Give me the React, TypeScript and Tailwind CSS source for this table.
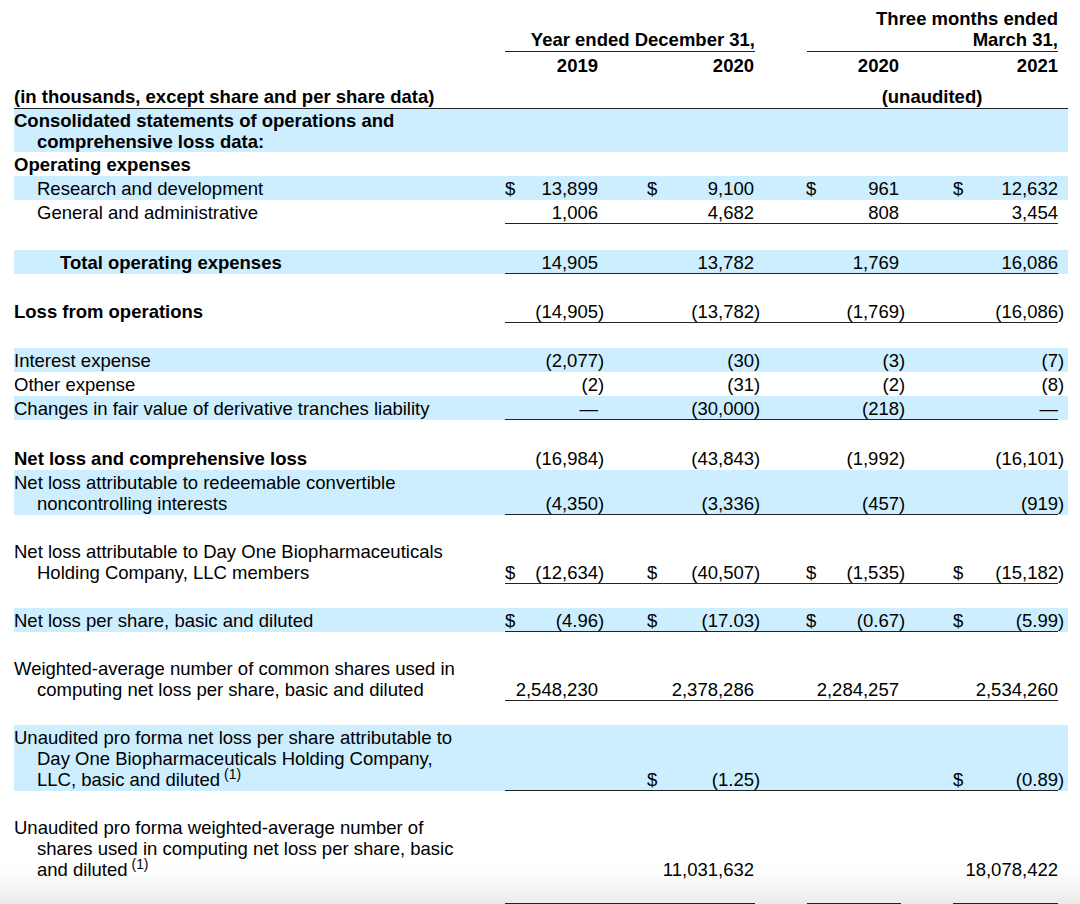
type Cell = { s?: boolean; v?: string }

interface RowProps {
  lines: React.ReactNode[]
  indent?: number
  bold?: boolean
  blue?: boolean
  vals?: Cell[]
  line?: boolean
  pad?: string
}

const COLS = ["w-[93px]", "ml-[49px] w-[107px]", "ml-[52px] w-[93px]", "ml-[54px] w-[105px]"]

function Num({ v }: { v: string }) {
  // closing paren hangs past the column edge
  if (v.endsWith(")")) {
    return (
      <span>
        {v.slice(0, -1)}
        <span className="inline-block w-0">)</span>
      </span>
    )
  }
  return <span>{v}</span>
}

function Values({ vals, line }: { vals: Cell[]; line?: boolean }) {
  return (
    <div className={`flex w-[553px] items-end pt-[2px] ${line ? "border-b border-[#222]" : "pb-[1px]"}`}>
      {vals.map((c, i) => (
        <div key={i} className={`flex justify-between ${COLS[i]}`}>
          <span>{c.s ? "$" : ""}</span>
          {c.v ? <Num v={c.v} /> : null}
        </div>
      ))}
    </div>
  )
}

function Row({ lines, indent = 0, bold, blue, vals, line, pad = "pt-[2px] pb-[1px]" }: RowProps) {
  const ind = indent === 1 ? "pl-[23px]" : indent === 2 ? "pl-[46px]" : ""
  return (
    <div className={`flex w-[1054px] ${blue ? "bg-[#cceeff]" : ""}`}>
      <div className={`w-[491px] whitespace-nowrap ${pad} ${ind} ${bold ? "font-bold" : ""}`}>
        {lines.map((l, i) => (
          <div key={i} className={i > 0 ? "pl-[23px]" : ""}>
            {l}
          </div>
        ))}
      </div>
      {vals && <Values vals={vals} line={line} />}
    </div>
  )
}

const Sup = () => <sup className="ml-[4px]">(1)</sup>

export default function App() {
  return (
    <div className="min-h-[904px] bg-[linear-gradient(to_bottom,#fff_868px,#ebebeb)] pl-[14px] font-['Liberation_Sans',Arial,sans-serif] text-[18.5px] leading-[21px] text-black">
      {/* column headers */}
      <div className="pt-[8px] font-bold">
        <div className="flex">
          <div className="w-[491px]" />
          <div className="flex w-[553px]">
            <div className="w-[250px]" />
            <div className="ml-[52px] w-[251px] text-right">Three months ended</div>
          </div>
        </div>
        <div className="flex">
          <div className="w-[491px]" />
          <div className="flex w-[553px]">
            <div className="w-[250px] border-b border-[#222] pb-[1px] text-right">Year ended December 31,</div>
            <div className="ml-[52px] w-[251px] border-b border-[#222] pb-[1px] text-right">March 31,</div>
          </div>
        </div>
        <div className="flex pt-[3px]">
          <div className="w-[491px]" />
          <div className="flex w-[553px]">
            {["2019", "2020", "2020", "2021"].map((y, i) => (
              <div key={i} className={`text-right ${COLS[i]}`}>
                {y}
              </div>
            ))}
          </div>
        </div>
        <div className="mt-[10px] flex w-[1054px] border-b border-[#222] pb-[1px]">
          <div className="w-[491px] whitespace-nowrap">(in thousands, except share and per share data)</div>
          <div className="flex w-[553px]">
            <div className="ml-[301px] w-[252px] text-center">(unaudited)</div>
          </div>
        </div>
      </div>

      {/* body */}
      <Row blue bold pad="pt-[1px]" lines={["Consolidated statements of operations and", "comprehensive loss data:"]} />
      <Row bold lines={["Operating expenses"]} />
      <Row
        blue
        indent={1}
        lines={["Research and development"]}
        vals={[{ s: true, v: "13,899" }, { s: true, v: "9,100" }, { s: true, v: "961" }, { s: true, v: "12,632" }]}
      />
      <Row
        indent={1}
        line
        lines={["General and administrative"]}
        vals={[{ v: "1,006" }, { v: "4,682" }, { v: "808" }, { v: "3,454" }]}
      />
      <div className="h-[26px]" />
      <Row
        blue
        bold
        indent={2}
        line
        lines={["Total operating expenses"]}
        vals={[{ v: "14,905" }, { v: "13,782" }, { v: "1,769" }, { v: "16,086" }]}
      />
      <div className="h-[25px]" />
      <Row
        bold
        line
        lines={["Loss from operations"]}
        vals={[{ v: "(14,905)" }, { v: "(13,782)" }, { v: "(1,769)" }, { v: "(16,086)" }]}
      />
      <div className="h-[25px]" />
      <Row blue lines={["Interest expense"]} vals={[{ v: "(2,077)" }, { v: "(30)" }, { v: "(3)" }, { v: "(7)" }]} />
      <Row lines={["Other expense"]} vals={[{ v: "(2)" }, { v: "(31)" }, { v: "(2)" }, { v: "(8)" }]} />
      <Row
        blue
        line
        lines={["Changes in fair value of derivative tranches liability"]}
        vals={[{ v: "—" }, { v: "(30,000)" }, { v: "(218)" }, { v: "—" }]}
      />
      <div className="h-[26px]" />
      <Row
        bold
        lines={["Net loss and comprehensive loss"]}
        vals={[{ v: "(16,984)" }, { v: "(43,843)" }, { v: "(1,992)" }, { v: "(16,101)" }]}
      />
      <Row
        blue
        line
        lines={["Net loss attributable to redeemable convertible", "noncontrolling interests"]}
        vals={[{ v: "(4,350)" }, { v: "(3,336)" }, { v: "(457)" }, { v: "(919)" }]}
      />
      <div className="h-[24px]" />
      <Row
        line
        lines={["Net loss attributable to Day One Biopharmaceuticals", "Holding Company, LLC members"]}
        vals={[
          { s: true, v: "(12,634)" },
          { s: true, v: "(40,507)" },
          { s: true, v: "(1,535)" },
          { s: true, v: "(15,182)" },
        ]}
      />
      <div className="h-[24px]" />
      <Row
        blue
        line
        lines={["Net loss per share, basic and diluted"]}
        vals={[
          { s: true, v: "(4.96)" },
          { s: true, v: "(17.03)" },
          { s: true, v: "(0.67)" },
          { s: true, v: "(5.99)" },
        ]}
      />
      <div className="h-[24px]" />
      <Row
        line
        lines={["Weighted-average number of common shares used in", "computing net loss per share, basic and diluted"]}
        vals={[{ v: "2,548,230" }, { v: "2,378,286" }, { v: "2,284,257" }, { v: "2,534,260" }]}
      />
      <div className="h-[24px]" />
      <Row
        blue
        line
        lines={[
          "Unaudited pro forma net loss per share attributable to",
          "Day One Biopharmaceuticals Holding Company,",
          <>
            LLC, basic and diluted
            <Sup />
          </>,
        ]}
        vals={[{}, { s: true, v: "(1.25)" }, {}, { s: true, v: "(0.89)" }]}
      />
      <div className="h-[24px]" />
      <Row
        lines={[
          "Unaudited pro forma weighted-average number of",
          "shares used in computing net loss per share, basic",
          <>
            and diluted
            <Sup />
          </>,
        ]}
        vals={[{}, { v: "11,031,632" }, {}, { v: "18,078,422" }]}
      />
      <div className="h-[22px]" />
      <div className="flex">
        <div className="w-[491px]" />
        <div className="flex w-[553px]">
          <div className="h-px w-[250px] bg-[#222]" />
          <div className="ml-[52px] h-px w-[94px] bg-[#222]" />
          <div className="ml-[52px] h-px w-[105px] bg-[#222]" />
        </div>
      </div>
    </div>
  )
}
